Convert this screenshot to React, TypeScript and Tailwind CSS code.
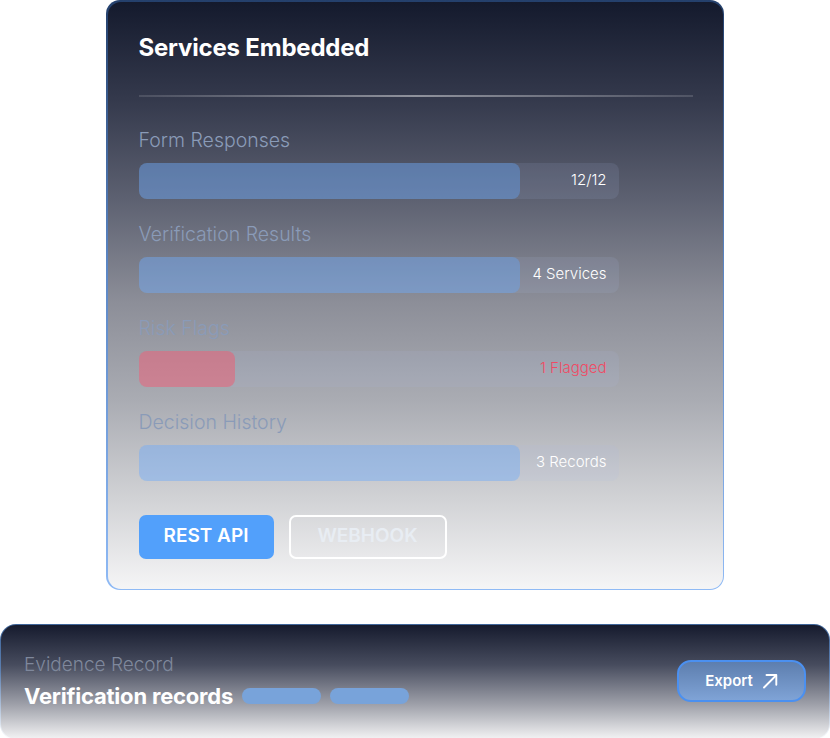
import React from "react";

const rows = [
  { label: "Form Responses", value: "12/12", pct: 79.4, red: false },
  { label: "Verification Results", value: "4 Services", pct: 79.4, red: false },
  { label: "Risk Flags", value: "1 Flagged", pct: 20, red: true },
  { label: "Decision History", value: "3 Records", pct: 79.4, red: false },
];

export default function App() {
  return (
    <div className="w-[830px] h-[738px] bg-white overflow-hidden flex flex-col" style={{ fontFamily: "Inter, 'Noto Sans', sans-serif" }}>
      <div className="ml-[106px] w-[618px] h-[590px] shrink-0 rounded-[14px] p-[1.5px] bg-[linear-gradient(180deg,#24406c_0%,#5b86c4_45%,#8fbaf5_100%)]">
        <div className="h-full w-full rounded-[13px] bg-[linear-gradient(180deg,#141a2d_0%,#353a4d_17%,#5e6272_34%,#8c8e98_51%,#aaacb3_68%,#d2d3d6_85%,#f5f5f6_100%)] pl-[31px] pr-[30px] pt-[32px] flex flex-col">
          <div className="text-[24px] leading-[28px] font-bold text-white tracking-[-0.2px]">Services Embedded</div>
          <div className="mt-[33px] h-[2px] w-[554px] bg-[linear-gradient(90deg,rgba(255,255,255,0.12),rgba(255,255,255,0.45)_50%,rgba(255,255,255,0.14))]" />
          <div className="mt-[31px] flex flex-col gap-[23px]">
            {rows.map((r) => (
              <div key={r.label} className="flex flex-col gap-[11px]">
                <div className="text-[19.5px] leading-[24px] font-light text-[#8a9bb8]">{r.label}</div>
                <div className="relative h-[36px] w-[480px] rounded-[8px] bg-[#a9c0e6]/[0.12]">
                  <div
                    className={r.red ? "h-full rounded-[8px] bg-[#ef5a6f]/50" : "h-full rounded-[8px] bg-[#64a8ff]/38"}
                    style={{ width: `${r.pct}%` }}
                  />
                  <div className={"absolute right-[12px] top-0 h-full flex items-center text-[15px] font-light " + (r.red ? "text-[#f04a64]" : "text-white")}>
                    {r.value}
                  </div>
                </div>
              </div>
            ))}
          </div>
          <div className="mt-[34px] flex gap-[15px]">
            <div className="h-[44px] w-[135px] rounded-[7px] bg-[#52a0fb] flex items-center justify-center text-[19px] font-semibold text-white">REST API</div>
            <div className="h-[44px] w-[158px] rounded-[7px] border-2 border-white flex items-center justify-center text-[19px] font-semibold text-[#e8edf3]">WEBHOOK</div>
          </div>
        </div>
      </div>
      <div className="mt-[34px] w-[830px] h-[116px] shrink-0 rounded-[16px] p-px bg-[linear-gradient(180deg,#3f6599_0%,#5c7fb0_40%,rgba(255,255,255,0)_100%)]">
        <div className="h-full w-full rounded-[15px] bg-[linear-gradient(180deg,#161b2e_0%,#474c5e_35%,#9fa1aa_70%,#f3f3f4_100%)] pl-[23px] pr-[23px] flex items-center">
          <div className="flex flex-col mt-[-2px]">
            <div className="text-[19px] leading-[24px] font-light text-[#7f889c]">Evidence Record</div>
            <div className="mt-[6px] flex items-center gap-[9px]">
              <div className="text-[22px] leading-[26px] font-bold text-white tracking-[-0.2px]">Verification records</div>
              <div className="h-[16px] w-[79px] rounded-full bg-[#78a3da]" />
              <div className="h-[16px] w-[79px] rounded-full bg-[#78a3da]" />
            </div>
          </div>
          <div className="ml-auto mt-[-2px] h-[42px] w-[129px] rounded-[14px] border-2 border-[#4b90f0] bg-[linear-gradient(180deg,#5d7eae,#7fa3d6)] flex items-center justify-center gap-[9px] text-[15px] font-semibold text-white">
            Export
            <svg width="16" height="16" viewBox="0 0 16 16" fill="none" stroke="currentColor" strokeWidth="1.9" strokeLinecap="round" strokeLinejoin="round">
              <path d="M2 14.5 L14 2.5" />
              <path d="M4.5 2 H14.3 V11.8" />
            </svg>
          </div>
        </div>
      </div>
    </div>
  );
}
